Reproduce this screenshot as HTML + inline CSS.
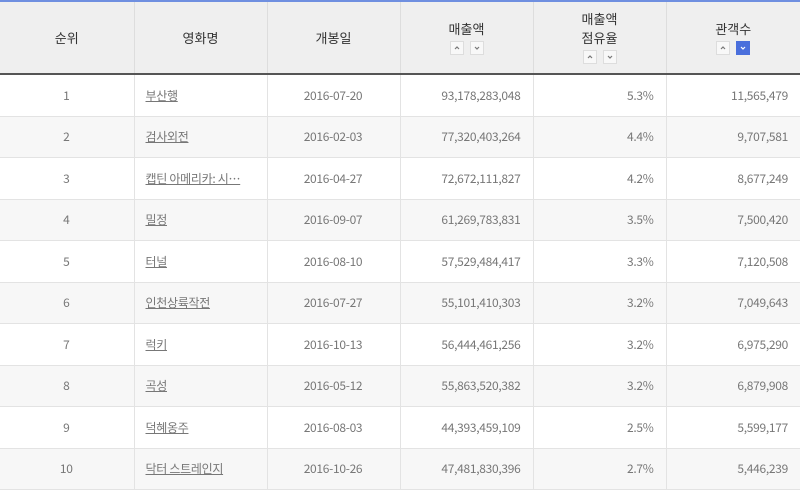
<!DOCTYPE html>
<html><head><meta charset="utf-8"><style>
html,body{margin:0;padding:0;width:800px;height:492px;overflow:hidden;background:#fff;font-family:"Noto Sans CJK KR","Liberation Sans",sans-serif;}
table{border-collapse:collapse;table-layout:fixed;width:800px;border-top:2px solid #6f8fe0;}
th{background:#efefef;color:#333;font-weight:normal;font-size:13px;line-height:19px;height:71px;border-left:1px solid #ddd;border-bottom:2px solid #555;padding:0;vertical-align:middle;}
th:first-child,td:first-child{border-left:none}
td{height:40.5px;border-left:1px solid #e3e3e3;border-bottom:1px solid #e3e3e3;font-size:12px;letter-spacing:-0.3px;color:#777;padding:0 12px 0 11px;white-space:nowrap;overflow:hidden;text-overflow:ellipsis}
tr.g td{background:#f7f7f7}
.c{text-align:center}.r{text-align:right}
td a{color:#777;text-decoration:underline}
.b{display:inline-block;width:12px;height:12px;border:1px solid #ddd;background:#f8f8f8;margin:3px 3px 0;vertical-align:top;position:relative}
.b svg{position:absolute;left:3px;top:3px}
.b.on{background:#4a6fdc;border-color:#4a6fdc}
</style></head><body>
<table>
<colgroup><col style="width:134px"><col style="width:133px"><col style="width:133px"><col style="width:133px"><col style="width:133px"><col style="width:134px"></colgroup>
<tr><th>순위</th><th>영화명</th><th>개봉일</th>
<th>매출액<br><span class="b"><svg width="6" height="6"><path d="M1 4L3 2L5 4" fill="none" stroke="#777" stroke-width="1.2"/></svg></span><span class="b"><svg width="6" height="6"><path d="M1 2L3 4L5 2" fill="none" stroke="#777" stroke-width="1.2"/></svg></span></th>
<th>매출액<br>점유율<br><span class="b"><svg width="6" height="6"><path d="M1 4L3 2L5 4" fill="none" stroke="#777" stroke-width="1.2"/></svg></span><span class="b"><svg width="6" height="6"><path d="M1 2L3 4L5 2" fill="none" stroke="#777" stroke-width="1.2"/></svg></span></th>
<th>관객수<br><span class="b"><svg width="6" height="6"><path d="M1 4L3 2L5 4" fill="none" stroke="#777" stroke-width="1.2"/></svg></span><span class="b on"><svg width="6" height="6"><path d="M1 2L3 4L5 2" fill="none" stroke="#fff" stroke-width="1.2"/></svg></span></th></tr>
<tr><td class="c">1</td><td><a>부산행</a></td><td class="c">2016-07-20</td><td class="r">93,178,283,048</td><td class="r">5.3%</td><td class="r">11,565,479</td></tr>
<tr class="g"><td class="c">2</td><td><a>검사외전</a></td><td class="c">2016-02-03</td><td class="r">77,320,403,264</td><td class="r">4.4%</td><td class="r">9,707,581</td></tr>
<tr><td class="c">3</td><td><a>캡틴 아메리카: 시…</a></td><td class="c">2016-04-27</td><td class="r">72,672,111,827</td><td class="r">4.2%</td><td class="r">8,677,249</td></tr>
<tr class="g"><td class="c">4</td><td><a>밀정</a></td><td class="c">2016-09-07</td><td class="r">61,269,783,831</td><td class="r">3.5%</td><td class="r">7,500,420</td></tr>
<tr><td class="c">5</td><td><a>터널</a></td><td class="c">2016-08-10</td><td class="r">57,529,484,417</td><td class="r">3.3%</td><td class="r">7,120,508</td></tr>
<tr class="g"><td class="c">6</td><td><a>인천상륙작전</a></td><td class="c">2016-07-27</td><td class="r">55,101,410,303</td><td class="r">3.2%</td><td class="r">7,049,643</td></tr>
<tr><td class="c">7</td><td><a>럭키</a></td><td class="c">2016-10-13</td><td class="r">56,444,461,256</td><td class="r">3.2%</td><td class="r">6,975,290</td></tr>
<tr class="g"><td class="c">8</td><td><a>곡성</a></td><td class="c">2016-05-12</td><td class="r">55,863,520,382</td><td class="r">3.2%</td><td class="r">6,879,908</td></tr>
<tr><td class="c">9</td><td><a>덕혜옹주</a></td><td class="c">2016-08-03</td><td class="r">44,393,459,109</td><td class="r">2.5%</td><td class="r">5,599,177</td></tr>
<tr class="g"><td class="c">10</td><td><a>닥터 스트레인지</a></td><td class="c">2016-10-26</td><td class="r">47,481,830,396</td><td class="r">2.7%</td><td class="r">5,446,239</td></tr>
</table>
</body></html>
